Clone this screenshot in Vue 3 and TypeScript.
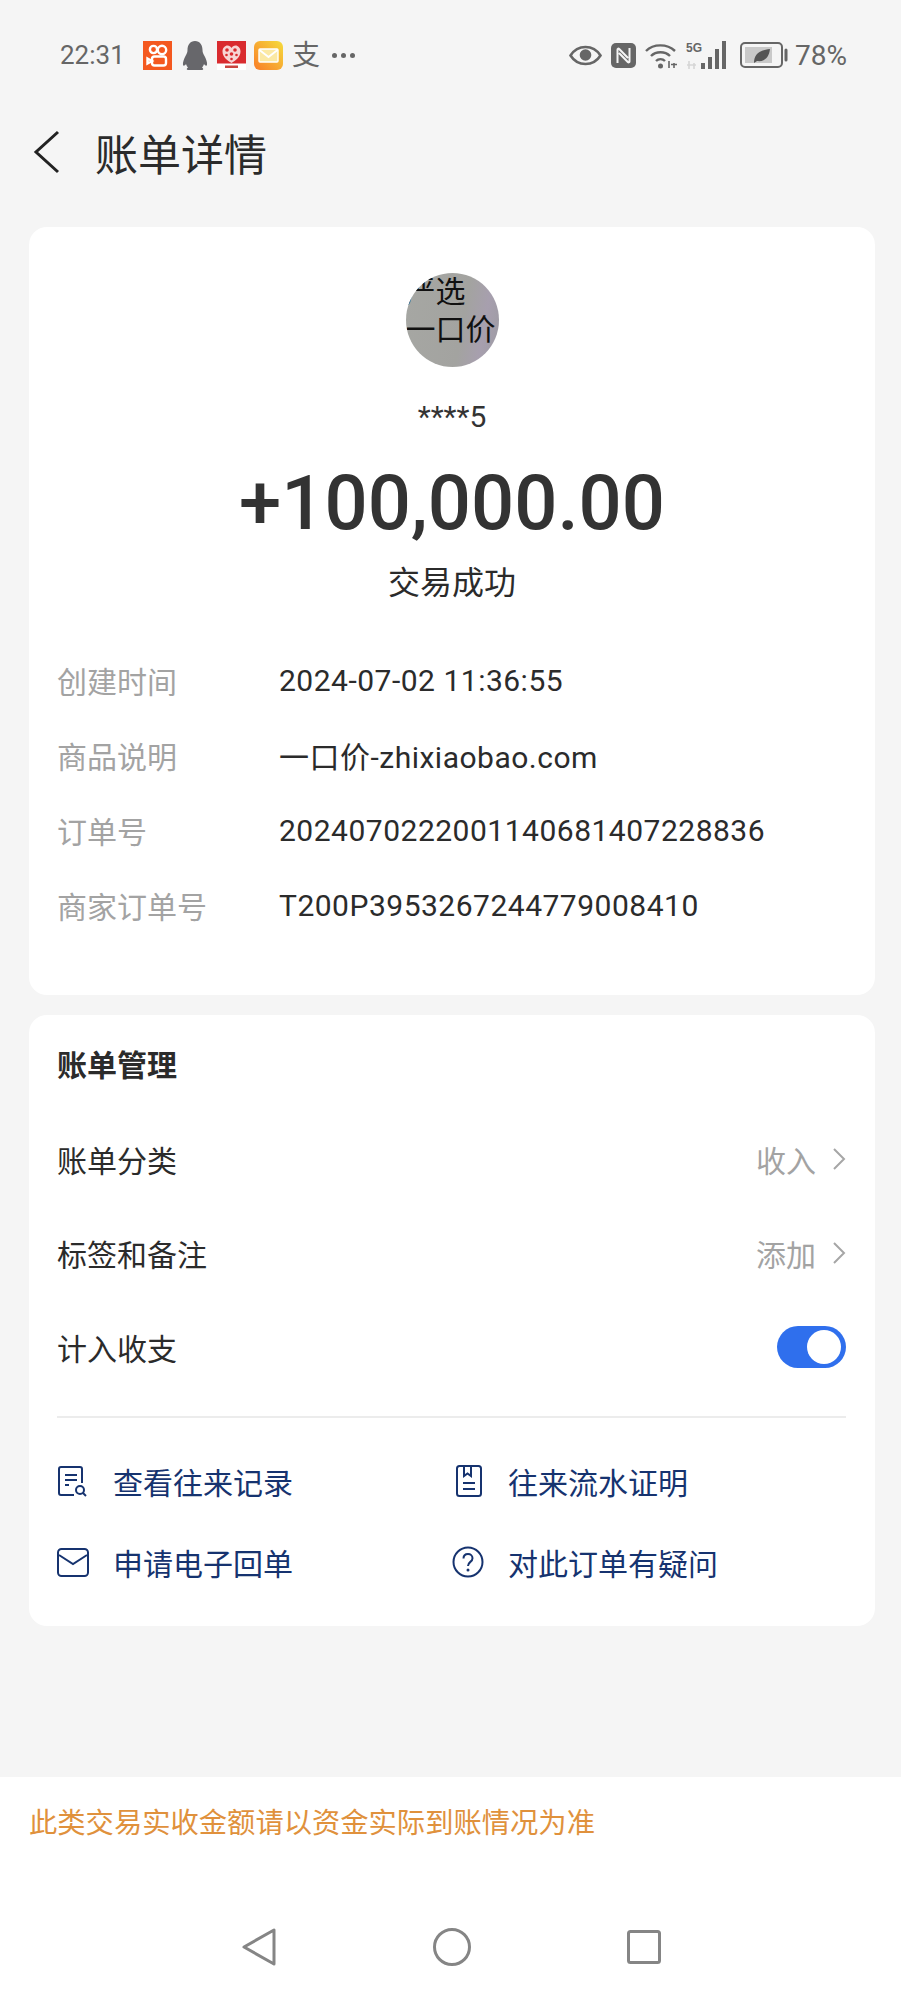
<template>
  <div class="page">
    <!-- 状态栏 -->
    <div class="statusbar">
      <div class="status-left">
        <span class="time">22:31</span>
        <svg class="app-icon" width="29" height="29" viewBox="0 0 29 29">
          <rect width="29" height="29" fill="#f4581f" />
          <g fill="none" stroke="#fff" stroke-width="2.4">
            <circle cx="10.5" cy="8.5" r="3.6" />
            <circle cx="19" cy="9" r="4.2" />
            <rect x="9" y="15.5" width="14" height="9" rx="2.5" />
            <path d="M9 20l-4.500-2.500v5z" />
          </g>
        </svg>
        <svg class="app-icon gap-penguin" width="26" height="29" viewBox="0 0 26 29">
          <path fill="#67676b" d="M13 0c5 0 7.500 4 7.500 9 0 2 .5 3.500 2 6 1.500 3 3 6.500 2.500 9-.5 1.500-2 .5-3-1-.5 1.500-1 2.500-2 3.500 1 .5 1.500 1.500 1 2.200-.5.300-4 .300-8 .300s-7.500 0-8-.3c-.5-.7 0-1.700 1-2.200-1-1-1.500-2-2-3.500-1 1.500-2.500 2.500-3 1-.5-2.500 1-6 2.500-9 1.500-2.500 2-4 2-6 0-5 2.500-9 7.500-9z" />
        </svg>
        <svg class="app-icon gap-heart" width="29" height="29" viewBox="0 0 29 29">
          <rect width="29" height="29" fill="#d92b2f" />
          <rect y="22.500" width="29" height="6.500" fill="#fff" />
          <path fill="#f7d5d5" d="M14.500 22c-4-2.500-9-6-9-11.500C5.500 7 8 4.500 10.500 4.500c1.800 0 3.200 1 4 2.500.8-1.500 2.200-2.500 4-2.500 2.500 0 5 2.500 5 6 0 5.500-5 9-9 11.500z" />
          <g fill="#d92b2f">
            <circle cx="10" cy="9" r="1.800" />
            <circle cx="18" cy="9" r="1.800" />
            <circle cx="14.500" cy="13" r="1.800" />
            <circle cx="9.500" cy="14" r="1.300" />
            <circle cx="19.500" cy="14" r="1.300" />
            <circle cx="14.500" cy="18" r="1.300" />
          </g>
          <rect x="8" y="24.500" width="13" height="2.500" fill="#c9453f" />
        </svg>
        <svg class="app-icon gap-mail" width="29" height="29" viewBox="0 0 29 29">
          <defs>
            <linearGradient id="mailBg" x1="0" y1="1" x2="1" y2="0">
              <stop offset="0" stop-color="#f97c28" />
              <stop offset="1" stop-color="#f5dc3c" />
            </linearGradient>
          </defs>
          <rect width="29" height="29" rx="6" fill="url(#mailBg)" />
          <rect x="5" y="8" width="19" height="13" rx="1" fill="#fbe9a4" stroke="#fff" stroke-width="1.400" />
          <path d="M5.500 9l9 7 9-7" fill="none" stroke="#fff" stroke-width="1.800" />
        </svg>
        <span class="zhi">支</span>
        <span class="more">
          <i></i><i></i><i></i>
        </span>
      </div>
      <div class="status-right">
        <svg width="33" height="21" viewBox="0 0 33 21">
          <path d="M1.500 10.500C5 5 10 2 16.500 2s11.500 3 15 8.500C28 16 23 19 16.500 19S5 16 1.500 10.500z" fill="none" stroke="#666" stroke-width="2.600" />
          <circle cx="16.500" cy="10" r="5.800" fill="#666" />
        </svg>
        <svg class="nfc" width="25" height="25" viewBox="0 0 25 25">
          <rect width="25" height="25" rx="5" fill="#666" />
          <path d="M6.500 20V6.500c0-1 1-1.200 1.700-.5L17 15M18.500 5v13.500c0 1-1 1.200-1.700.5L8 10" fill="none" stroke="#f5f5f5" stroke-width="2" />
        </svg>
        <svg class="wifi" width="33" height="27" viewBox="0 0 33 27">
          <g fill="none" stroke="#666" stroke-width="2.400">
            <path d="M1 9c7.500-7.500 21-7.500 29 0" />
            <path d="M6 14c5-5 14-5 19 0" />
            <path d="M11 19c2.500-2.500 6.500-2.500 9 0" />
          </g>
          <circle cx="15.500" cy="24" r="2.500" fill="#666" />
          <path d="M24 26v-7M29 21v5M26 22.500h6" stroke="#666" stroke-width="1.600" fill="none" />
        </svg>
        <div class="signal">
          <svg width="44" height="28" viewBox="0 0 44 28">
            <text x="0" y="11" class="five-g">5G</text>
            <path d="M3 28v-8M8 22v6M1 24h9" stroke="#d6d6d6" stroke-width="1.600" fill="none" />
            <rect x="15" y="22" width="4" height="6" fill="#666" />
            <rect x="22" y="16" width="4" height="12" fill="#666" />
            <rect x="29" y="8" width="4" height="20" fill="#666" />
            <rect x="36" y="0" width="4" height="28" fill="#666" />
          </svg>
        </div>
        <svg class="battery" width="49" height="26" viewBox="0 0 49 26">
          <rect x="1" y="1" width="41" height="24" rx="4" fill="none" stroke="#666" stroke-width="2" />
          <rect x="5" y="5" width="27" height="16" fill="#c9c9c9" />
          <path d="M46 8v10" stroke="#666" stroke-width="3" stroke-linecap="round" />
          <path d="M14 21c0-8 5-13 16-14-1 9-6 13-13 12l-3 2z" fill="#555" />
        </svg>
        <span class="percent">78%</span>
      </div>
    </div>

    <!-- 标题栏 -->
    <div class="header">
      <svg class="back" width="28" height="44" viewBox="0 0 28 44">
        <path d="M25 2L3 22l22 20" fill="none" stroke="#222" stroke-width="3" />
      </svg>
      <span class="title">账单详情</span>
    </div>

    <!-- 账单信息 -->
    <section class="card detail-card">
      <div class="avatar">
        <span class="avatar-top">严选</span>
        <span class="avatar-bottom">一口价</span>
      </div>
      <div class="payer">****5</div>
      <div class="amount">+100,000.00</div>
      <div class="trade-state">交易成功</div>
      <div class="detail-list">
        <div v-for="row in detailRows" :key="row.label" class="detail-row">
          <span class="detail-label">{{ row.label }}</span>
          <span class="detail-value">{{ row.value }}</span>
        </div>
      </div>
    </section>

    <!-- 账单管理 -->
    <section class="card manage-card">
      <div class="manage-title">账单管理</div>
      <div v-for="row in manageRows" :key="row.label" class="manage-row">
        <span class="manage-label">{{ row.label }}</span>
        <span class="manage-value">{{ row.value }}</span>
        <svg width="14" height="24" viewBox="0 0 14 24">
          <path d="M2 2l10 10L2 22" fill="none" stroke="#a6a6a6" stroke-width="2" />
        </svg>
      </div>
      <div class="manage-row">
        <span class="manage-label">计入收支</span>
        <span class="toggle"><i></i></span>
      </div>
      <div class="divider"></div>
      <div class="links">
        <a class="link">
          <svg width="32" height="32" viewBox="0 0 32 32">
            <g fill="none" stroke="#16336f" stroke-width="2">
              <path d="M25 18V4a2 2 0 0 0-2-2H4a2 2 0 0 0-2 2v24a2 2 0 0 0 2 2h13" />
              <path d="M8 10h12M8 15h12M8 20h4" />
              <circle cx="23" cy="25" r="4" />
              <path d="M26 28l3 3" />
            </g>
          </svg>
          <span>查看往来记录</span>
        </a>
        <a class="link">
          <svg width="32" height="32" viewBox="0 0 32 32">
            <g fill="none" stroke="#16336f" stroke-width="2">
              <rect x="5" y="1" width="24" height="30" rx="2.500" />
              <path d="M12 1v10l3.500-2.500L19 11V1" />
              <path d="M11 18h12M11 24h12" />
            </g>
          </svg>
          <span>往来流水证明</span>
        </a>
        <a class="link">
          <svg width="32" height="32" viewBox="0 0 32 32">
            <g fill="none" stroke="#16336f" stroke-width="2">
              <rect x="1" y="3" width="30" height="27" rx="3.500" />
              <path d="M2 9l14 9 14-9" />
            </g>
          </svg>
          <span>申请电子回单</span>
        </a>
        <a class="link">
          <svg width="32" height="32" viewBox="0 0 32 32">
            <circle cx="16" cy="16" r="14.500" fill="none" stroke="#16336f" stroke-width="2" />
            <path d="M11.500 12.500c0-3 2-4.500 4.500-4.500s4.500 1.700 4.500 4.200c0 3.800-4.500 3.600-4.500 7.800" fill="none" stroke="#16336f" stroke-width="2" />
            <circle cx="16" cy="24" r="1.500" fill="#16336f" />
          </svg>
          <span>对此订单有疑问</span>
        </a>
      </div>
    </section>

    <!-- 底部提示和导航 -->
    <footer class="footer">
      <div class="notice">此类交易实收金额请以资金实际到账情况为准</div>
      <div class="navbar">
        <svg width="36" height="40" viewBox="0 0 36 40">
          <path d="M3 20L33 3v34z" fill="none" stroke="#858585" stroke-width="3" stroke-linejoin="round" />
        </svg>
        <svg width="38" height="38" viewBox="0 0 38 38">
          <circle cx="19" cy="19" r="17.500" fill="none" stroke="#858585" stroke-width="3" />
        </svg>
        <svg width="34" height="34" viewBox="0 0 34 34">
          <rect x="1.500" y="1.500" width="31" height="31" rx="2" fill="none" stroke="#858585" stroke-width="3" />
        </svg>
      </div>
    </footer>
  </div>
</template>

<script setup lang="ts">
interface DetailRow {
  label: string
  value: string
}

const detailRows: DetailRow[] = [
  { label: '创建时间', value: '2024-07-02 11:36:55' },
  { label: '商品说明', value: '一口价-zhixiaobao.com' },
  { label: '订单号', value: '2024070222001140681407228836' },
  { label: '商家订单号', value: 'T200P3953267244779008410' }
]

const manageRows: DetailRow[] = [
  { label: '账单分类', value: '收入' },
  { label: '标签和备注', value: '添加' }
]
</script>

<style>
body {
  margin: 0;
  background: #f5f5f5;
}
</style>

<style scoped>
.page {
  width: 901px;
  height: 2000px;
  display: flex;
  flex-direction: column;
  overflow: hidden;
  background: #f5f5f5;
  font-family: Roboto, "Noto Sans CJK SC", sans-serif;
  color: #2b2b2b;
}

.statusbar {
  height: 110px;
  flex-shrink: 0;
  display: flex;
  align-items: center;
  justify-content: space-between;
  padding: 0 54px 0 60px;
  box-sizing: border-box;
}

.status-left,
.status-right {
  display: flex;
  align-items: center;
}

.time {
  width: 83px;
  font-size: 26px;
  color: #666;
}

.gap-penguin {
  margin-left: 10px;
}

.gap-heart {
  margin-left: 9px;
}

.gap-mail {
  margin-left: 8px;
}

.zhi {
  margin-left: 9px;
  font-size: 28px;
  line-height: 29px;
  color: #666;
}

.more {
  margin-left: 12px;
  display: flex;
  gap: 4px;
}

.more i {
  width: 5px;
  height: 5px;
  border-radius: 50%;
  background: #666;
}

.nfc {
  margin-left: 9px;
}

.wifi {
  margin-left: 9px;
}

.signal {
  margin-left: 8px;
  display: flex;
}

.five-g {
  font-family: "Liberation Sans", sans-serif;
  font-size: 12px;
  font-weight: 700;
  fill: #666;
}

.battery {
  margin-left: 10px;
}

.percent {
  margin-left: 6px;
  font-size: 28px;
  color: #666;
}

.header {
  height: 84px;
  flex-shrink: 0;
  display: flex;
  align-items: center;
  padding-left: 33px;
}

.title {
  margin-left: 34px;
  font-size: 43px;
  color: #2b2b2b;
}

.card {
  margin: 0 26px 0 29px;
  background: #fff;
  border-radius: 18px;
  box-sizing: border-box;
}

.detail-card {
  margin-top: 33px;
  height: 768px;
  padding-top: 46px;
  display: flex;
  flex-direction: column;
  align-items: center;
}

.avatar {
  position: relative;
  width: 93px;
  height: 94px;
  flex-shrink: 0;
  border-radius: 50%;
  overflow: hidden;
  background: linear-gradient(100deg, #a6a7a3 0%, #a3a3a0 60%, #a79fae 80%, #9c9ba2 100%);
  color: #111;
}

.avatar-top,
.avatar-bottom {
  position: absolute;
  white-space: nowrap;
  font-size: 30px;
  line-height: 34px;
}

.avatar-top {
  top: 2px;
  left: 2px;
  text-indent: -2px;
}

.avatar-bottom {
  top: 40px;
  left: 0;
  font-size: 30px;
}

.payer {
  margin-top: 30px;
  font-size: 30px;
  line-height: 40px;
  color: #333;
}

.amount {
  margin-top: 22px;
  font-size: 76px;
  line-height: 88px;
  font-weight: 500;
  color: #333;
}

.trade-state {
  margin-top: 14px;
  font-size: 32px;
  line-height: 44px;
  color: #2b2b2b;
}

.detail-list {
  align-self: stretch;
  margin-top: 50px;
  padding-left: 28px;
  display: flex;
  flex-direction: column;
  gap: 25px;
}

.detail-row {
  display: flex;
  align-items: center;
  height: 50px;
  font-size: 30px;
}

.detail-label {
  width: 222px;
  color: #a3a3a3;
}

.detail-value {
  color: #2b2b2b;
  letter-spacing: 0.5px;
}

.manage-card {
  margin-top: 20px;
  height: 611px;
  padding: 0 29px 0 28px;
}

.manage-title {
  padding-top: 31px;
  font-size: 30px;
  line-height: 40px;
  font-weight: 700;
}

.manage-row {
  display: flex;
  align-items: center;
  height: 94px;
  font-size: 30px;
}

.manage-title + .manage-row {
  margin-top: 26px;
}

.manage-label {
  flex: 1;
  color: #2b2b2b;
}

.manage-value {
  margin-right: 16px;
  color: #a3a3a3;
}

.toggle {
  position: relative;
  width: 69px;
  height: 42px;
  border-radius: 21px;
  background: #2f6fed;
}

.toggle i {
  position: absolute;
  top: 4px;
  right: 5px;
  width: 34px;
  height: 34px;
  border-radius: 50%;
  background: #fff;
}

.divider {
  height: 2px;
  margin-top: 22px;
  background: #ececec;
}

.links {
  margin-top: 22px;
  display: grid;
  grid-template-columns: 395px 1fr;
  grid-auto-rows: 81px;
}

.link {
  display: flex;
  align-items: center;
  gap: 24px;
  font-size: 30px;
  color: #16336f;
}

.footer {
  margin-top: auto;
  height: 223px;
  flex-shrink: 0;
  background: #fff;
  padding: 29px 29px 0;
  box-sizing: border-box;
}

.notice {
  font-size: 28.300px;
  line-height: 36px;
  color: #e0913c;
}

.navbar {
  margin-top: 85px;
  margin-left: 212px;
  width: 420px;
  display: flex;
  align-items: center;
  justify-content: space-between;
}
</style>
